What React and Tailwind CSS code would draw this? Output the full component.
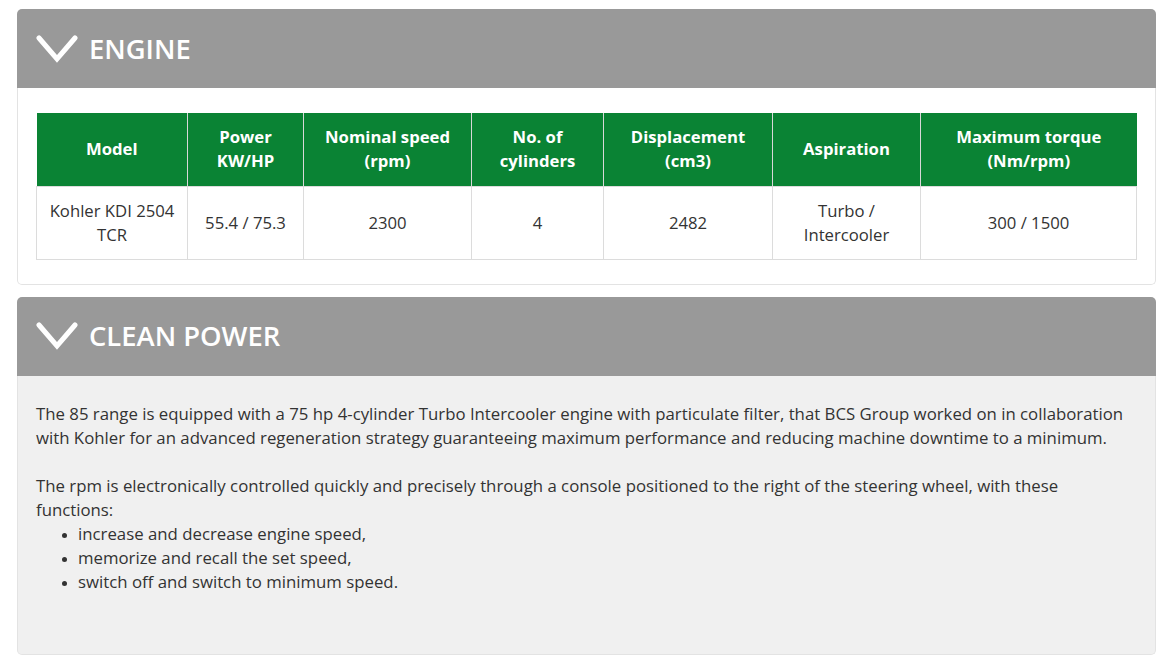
import React from "react";

const cols = [
  { head: ["Model"], w: "w-[151px]" },
  { head: ["Power", "KW/HP"], w: "w-[116px]" },
  { head: ["Nominal speed", "(rpm)"], w: "w-[168px]" },
  { head: ["No. of", "cylinders"], w: "w-[132px]" },
  { head: ["Displacement", "(cm3)"], w: "w-[169px]" },
  { head: ["Aspiration"], w: "w-[148px]" },
  { head: ["Maximum torque", "(Nm/rpm)"], w: "" },
];

const row = [
  ["Kohler KDI 2504", "TCR"],
  ["55.4 / 75.3"],
  ["2300"],
  ["4"],
  ["2482"],
  ["Turbo /", "Intercooler"],
  ["300 / 1500"],
];

const Chevron = () => (
  <svg width="42" height="30" viewBox="0 0 42 30" className="shrink-0">
    <path d="M3 4 L21 25 L39 4" fill="none" stroke="white" strokeWidth="5" strokeLinecap="round" strokeLinejoin="miter" />
  </svg>
);

const PanelHeader = ({ title }) => (
  <div className="h-[79px] bg-[#999999] rounded-t-[5px] flex items-center pl-[19px] gap-[11px]">
    <Chevron />
    <h2 className="text-white text-[27.4px] font-semibold">{title}</h2>
  </div>
);

export default function App() {
  return (
    <div className="bg-white min-h-screen px-[17px] pt-[9px] text-[#333] font-['Open_Sans',sans-serif] w-[1173px]">
      <div className="w-[1139px]">
        <PanelHeader title="ENGINE" />
        <div className="border border-t-0 border-[#e3e3e3] rounded-b-[5px] px-[18px] pt-[25px] pb-[24px]">
          <table className="w-full border-collapse text-[16.7px] leading-[24px] text-center">
            <thead>
              <tr className="bg-[#0a8334] text-white h-[73px]">
                {cols.map((c, i) => (
                  <th key={i} className={`${c.w} font-bold border-l border-[#d8d8d8] first:border-l-0 px-2`}>
                    {c.head.map((l, j) => (
                      <div key={j}>{l}</div>
                    ))}
                  </th>
                ))}
              </tr>
            </thead>
            <tbody>
              <tr className="h-[73px]">
                {row.map((c, i) => (
                  <td key={i} className="border border-[#dcdcdc] px-2">
                    {c.map((l, j) => (
                      <div key={j}>{l}</div>
                    ))}
                  </td>
                ))}
              </tr>
            </tbody>
          </table>
        </div>

        <div className="mt-[12px]">
          <PanelHeader title="CLEAN POWER" />
          <div className="bg-[#f0f0f0] border border-t-0 border-[#e3e3e3] rounded-b-[5px] pl-[18px] pr-[28px] pt-[26px] h-[279px] text-[16.8px] leading-[24px]">
            <p>
              The 85 range is equipped with a 75 hp 4-cylinder Turbo Intercooler engine with particulate filter, that BCS Group worked on in collaboration with Kohler for an advanced regeneration strategy guaranteeing maximum performance and reducing machine downtime to a minimum.
            </p>
            <p className="mt-[24px]">
              The rpm is electronically controlled quickly and precisely through a console positioned to the right of the steering wheel, with these functions:
            </p>
            <ul className="list-disc pl-[42px] marker:text-[13px]">
              <li>increase and decrease engine speed,</li>
              <li>memorize and recall the set speed,</li>
              <li>switch off and switch to minimum speed.</li>
            </ul>
          </div>
        </div>
      </div>
    </div>
  );
}
